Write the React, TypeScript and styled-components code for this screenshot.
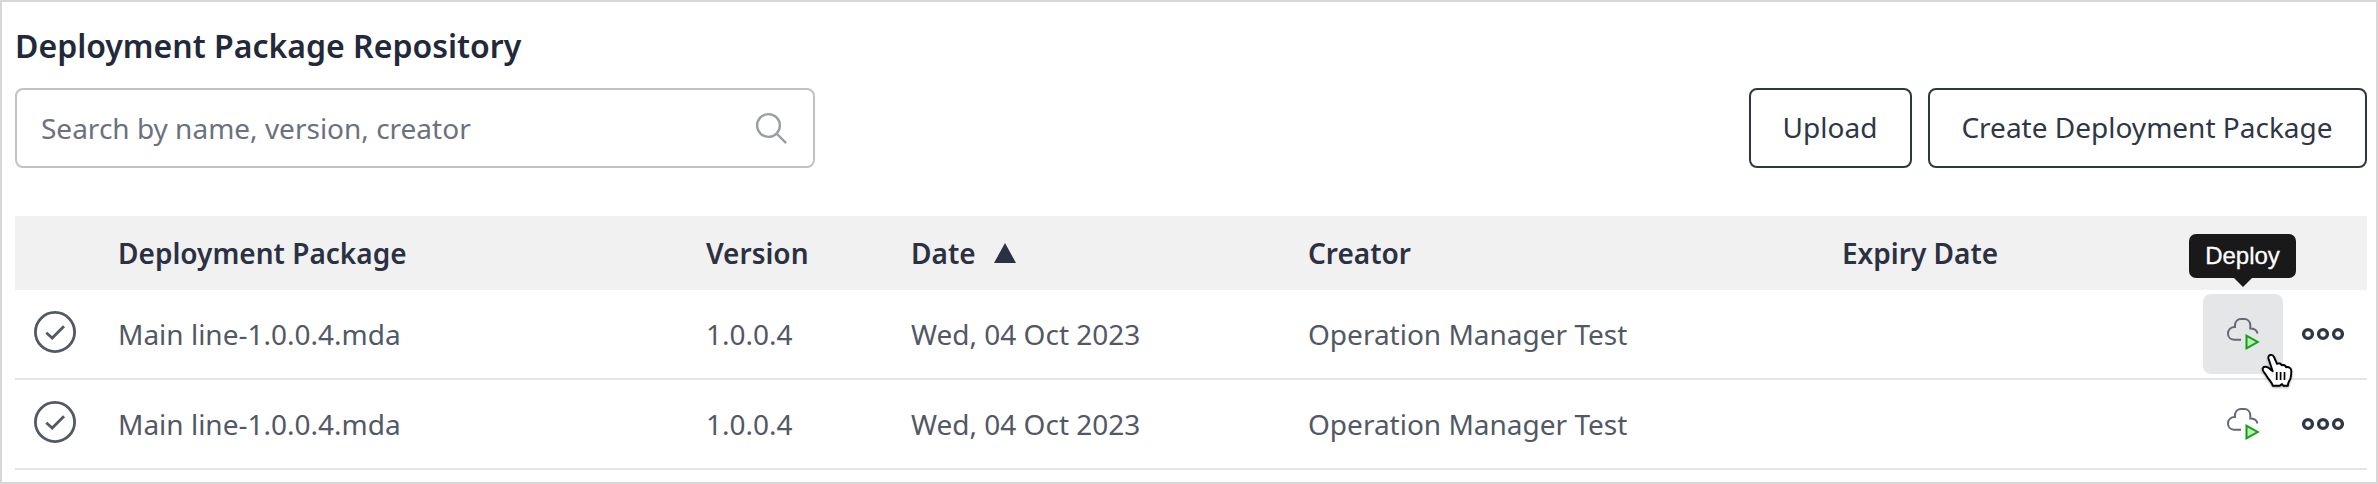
import React from "react";
import styled, { createGlobalStyle } from "styled-components";

const GlobalStyle = createGlobalStyle`
  *, *::before, *::after { box-sizing: border-box; }
  body { margin: 0; background: #fff; font-family: "Noto Sans", "Open Sans", sans-serif; }
`;

const Panel = styled.main`
  width: 2378px;
  height: 484px;
  padding: 0 9px 0 13px;
  border: 2px solid #d7d7d7;
  overflow: hidden;
`;

const Title = styled.h1`
  margin: 0;
  height: 86px;
  padding-top: 21px;
  color: #22293a;
  font-size: 32px;
  font-weight: 600;
  line-height: 46px;
  white-space: nowrap;
`;

const Toolbar = styled.div`
  display: flex;
  justify-content: space-between;
  height: 80px;
`;

const SearchBox = styled.label`
  display: flex;
  align-items: center;
  width: 800px;
  padding: 0 26px 1px 24px;
  border: 2px solid #c1c1c8;
  border-radius: 8px;
`;

const SearchInput = styled.input`
  flex: 1;
  min-width: 0;
  padding: 0;
  border: 0;
  outline: 0;
  background: transparent;
  font: 28px/38px "Noto Sans", sans-serif;
  &::placeholder { color: #6c717e; opacity: 1; }
`;

const Actions = styled.div`
  display: flex;
  gap: 16px;
`;

const Button = styled.button<{ $width: number }>`
  width: ${(p) => p.$width}px;
  padding: 0 1px 2px 0;
  border: 2px solid #2f3646;
  border-radius: 8px;
  background: #fff;
  color: #2f3646;
  font: 28px/38px "Noto Sans", sans-serif;
  white-space: nowrap;
`;

const Table = styled.div`
  margin-top: 48px;
`;

const Row = styled.div`
  display: grid;
  grid-template-columns: 103px 588px 205px 397px 534px 361px 1fr;
  align-items: center;
  height: 90px;
  border-bottom: 2px solid #e5e5e5;
  color: #525866;
  font-size: 28px;
  line-height: 38px;
  white-space: nowrap;
`;

const HeaderRow = styled(Row)`
  height: 74px;
  border-bottom: 0;
  background: #f1f1f1;
  color: #2b3142;
  font-weight: 600;
`;

const SortHeader = styled.div`
  display: flex;
  align-items: center;
  gap: 18px;
`;

const StatusCell = styled.div`
  display: flex;
  padding: 0 0 4px 19px;
`;

const ActionsCell = styled.div`
  display: flex;
  align-items: center;
  gap: 18px;
`;

const IconButton = styled.button<{ $active?: boolean }>`
  position: relative;
  display: grid;
  place-items: center;
  width: 80px;
  height: 80px;
  padding: 0;
  border: 0;
  border-radius: 8px;
  background: ${(p) => (p.$active ? "#e5e6e8" : "transparent")};
`;

const Tooltip = styled.span`
  position: absolute;
  left: -14px;
  top: -60px;
  width: 107px;
  height: 44px;
  border-radius: 7px;
  background: #191919;
  color: #fff;
  font: 24px/43px "Liberation Sans", Arial, sans-serif;
  -webkit-text-stroke: 0.3px #fff;
  text-align: center;
  &::after {
    content: "";
    position: absolute;
    left: 44px;
    top: 43px;
    border: 10px solid transparent;
    border-top-color: #191919;
    border-bottom: 0;
  }
`;

const Pointer = styled.svg`
  position: absolute;
  left: 56px;
  top: 58px;
  filter: drop-shadow(0 1px 1px rgba(0, 0, 0, 0.35));
`;

const SearchIcon = () => (
  <svg width="32" height="32" viewBox="0 0 32 32" fill="none" stroke="#999da6" strokeWidth="2.4" strokeLinecap="round">
    <circle cx="13.5" cy="13.5" r="11.4" />
    <path d="M22 22l8.4 8.4" />
  </svg>
);

const CheckIcon = () => (
  <svg width="42" height="42" viewBox="0 0 42 42" fill="none" stroke="#525866" strokeWidth="2.8">
    <circle cx="21" cy="21" r="19.6" />
    <path d="M12.3 21.8l5.9 5.2L30 15.2" />
  </svg>
);

const SortIcon = () => (
  <svg width="22" height="20" viewBox="0 0 22 20">
    <path d="M11 0l11 20H0z" fill="#2b3142" />
  </svg>
);

const DeployIcon = () => (
  <svg width="34" height="34" viewBox="0 0 34 34" fill="none">
    <path
      d="M15 22.700H8C4.500 22.700 2 20 2 16.500S4.500 10 9 10V8.500C9 4.700 11.500 2 15 2h3.300c3.500 0 6 2.700 6 6.500v3c4 0 6.500 1.700 7.200 5"
      stroke="#616876"
      strokeWidth="2"
    />
    <path d="M20.500 18.700v12.600L31.700 25z" fill="#b8efb8" stroke="#12a012" strokeWidth="2" />
  </svg>
);

const MoreIcon = () => (
  <svg width="44" height="14" viewBox="0 0 44 14" fill="none" stroke="#2f3646" strokeWidth="3.4">
    <circle cx="7" cy="7" r="4.400" />
    <circle cx="22" cy="7" r="4.400" />
    <circle cx="37" cy="7" r="4.400" />
  </svg>
);

const HandPointer = () => (
  <Pointer width="36" height="40" viewBox="0 0 36 40">
    <path
      d="M9.500 6.500C8.500 2.600 13.600 1.500 15 5l3 6.800c2-1 4.200-.3 4.600 1.600 1.900-.9 4-.1 4.500 1.800 2.600-.6 5.200.6 5.200 3.800 0 4.500 0 7-2 9.800-1 1.500-1.400 3-1.400 5h-4.400l-1.500-1.800-2.200 1.800h-7c-.5-3-3.500-5.500-6-9.500C6.500 21.500 3 19.500 3.700 16.500c.8-2.700 5-2.400 8 1.200l2 1.500z"
      fill="#fff"
      stroke="#000"
      strokeWidth="1.900"
      strokeLinejoin="round"
    />
    <path d="M17.700 20v8M21.600 20v8M25.500 20v8" stroke="#000" strokeWidth="1.700" />
  </Pointer>
);

const packages = [
  { id: 1, name: "Main line-1.0.0.4.mda", version: "1.0.0.4", date: "Wed, 04 Oct 2023", creator: "Operation Manager Test", active: true },
  { id: 2, name: "Main line-1.0.0.4.mda", version: "1.0.0.4", date: "Wed, 04 Oct 2023", creator: "Operation Manager Test", active: false },
];

export default function App() {
  return (
    <>
      <GlobalStyle />
      <Panel>
        <Title>Deployment Package Repository</Title>
        <Toolbar>
          <SearchBox>
            <SearchInput placeholder="Search by name, version, creator" />
            <SearchIcon />
          </SearchBox>
          <Actions>
            <Button $width={163}>Upload</Button>
            <Button $width={439}>Create Deployment Package</Button>
          </Actions>
        </Toolbar>
        <Table>
          <HeaderRow>
            <div />
            <div>Deployment Package</div>
            <div>Version</div>
            <SortHeader>
              Date
              <SortIcon />
            </SortHeader>
            <div>Creator</div>
            <div>Expiry Date</div>
            <div />
          </HeaderRow>
          {packages.map((item) => (
            <Row key={item.id}>
              <StatusCell>
                <CheckIcon />
              </StatusCell>
              <div>{item.name}</div>
              <div>{item.version}</div>
              <div>{item.date}</div>
              <div>{item.creator}</div>
              <div />
              <ActionsCell>
                <IconButton $active={item.active} aria-label="Deploy">
                  <DeployIcon />
                  {item.active && <Tooltip>Deploy</Tooltip>}
                  {item.active && <HandPointer />}
                </IconButton>
                <MoreIcon />
              </ActionsCell>
            </Row>
          ))}
        </Table>
      </Panel>
    </>
  );
}
